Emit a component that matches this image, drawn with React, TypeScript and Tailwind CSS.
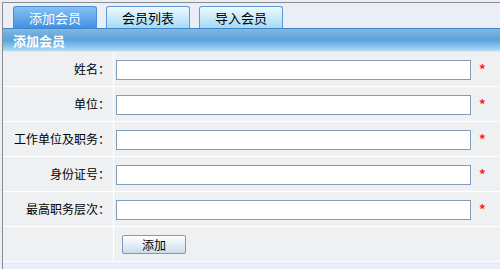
import React from 'react';

const FIELDS = ['姓名', '单位', '工作单位及职务', '身份证号', '最高职务层次'];

const TABS = [
  { label: '添加会员', active: true },
  { label: '会员列表', active: false },
  { label: '导入会员', active: false },
];

export default function App() {
  return (
    <div className="w-[500px] h-[269px] overflow-hidden bg-[#eaeef6] pt-[2px] pl-[2px] font-['Noto_Sans_CJK_SC',sans-serif] text-black">
      <div className="h-[267px] border-t border-l border-[#8c8c8c]">
        {/* tabs */}
        <div className="flex items-end gap-[9px] pl-[10px] h-[26px] border-b border-[#3a86cf]">
          {TABS.map((tab) => (
            <div
              key={tab.label}
              className={`w-[84px] h-[22px] rounded-t-[3px] border border-b-0 flex items-center justify-center text-[13px] leading-none ${
                tab.active
                  ? 'border-[#4a8fd6] bg-gradient-to-b from-[#86c1f2] to-[#3f91e2] text-white'
                  : 'border-[#5c9ad8] bg-gradient-to-b from-[#f0f9fe] to-[#a4daf5] text-black'
              }`}
            >
              {tab.label}
            </div>
          ))}
        </div>

        {/* section header */}
        <div className="h-[23px] border-b border-[#d4ebfa] bg-[linear-gradient(to_bottom,#84b9de_0%,#68aadb_30%,#5aa4de_50%,#8cc4ec_80%,#b6dcf5_100%)] flex items-center pl-[10px] text-[13px] font-bold text-white leading-none">
          添加会员
        </div>

        {/* form rows */}
        {FIELDS.map((f) => (
          <div key={f} className="flex h-[35px] border-b border-white bg-[#eff0f2]">
            <div className="w-[111px] border-r border-white flex items-center justify-end pr-[3px] text-[12px]">
              {f}：
            </div>
            <div className="flex items-center pl-[2px] pt-[2px]">
              <input className="w-[355px] h-[20px] border border-[#7f9db9] bg-white outline-none" />
              <span className="ml-[8px] -mt-[4px] text-[13px] font-bold text-[#ff1a1a] leading-none">*</span>
            </div>
          </div>
        ))}

        <div className="flex h-[35px] border-b border-white bg-[#eff0f2]">
          <div className="w-[111px] border-r border-white" />
          <div className="flex items-center pl-[8px] pt-[1px]">
            <button className="w-[64px] h-[19px] rounded-[2px] border border-[#7b98bf] bg-gradient-to-b from-[#ffffff] to-[#c9dcec] text-[12px] leading-none flex items-center justify-center">
              添加
            </button>
          </div>
        </div>

        <div className="h-full bg-[#e8eef8]" />
      </div>
    </div>
  );
}
